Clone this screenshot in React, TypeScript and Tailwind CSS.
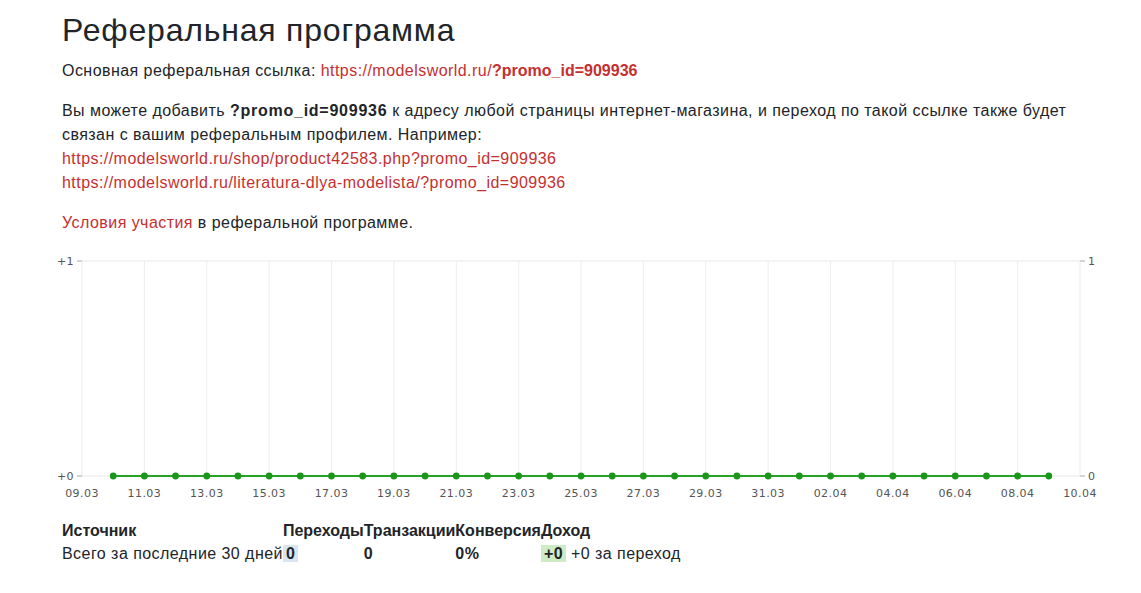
const START = 82;
const STEP = 998 / 32;

const labels = [
  "09.03", "11.03", "13.03", "15.03", "17.03", "19.03", "21.03", "23.03", "25.03",
  "27.03", "29.03", "31.03", "02.04", "04.04", "06.04", "08.04", "10.04",
];

// chart coordinates are taken relative to svg top
const TOP = 26;
const BOTTOM = 241;

const Chart = () => {
  const points = Array.from({ length: 31 }, (_, i) => START + STEP * (i + 1));
  return (
    <svg width="1141" height="284" className="block" style={{ fontFamily: '"DejaVu Sans", Verdana, sans-serif' }}>
      {labels.map((l, i) => {
        const x = START + STEP * 2 * i;
        return (
          <g key={l}>
            <line x1={x} x2={x} y1={TOP} y2={BOTTOM} stroke="#ededed" strokeWidth="1" />
            <text x={x} y={262} textAnchor="middle" fontSize="11" fill="#555">
              {l}
            </text>
          </g>
        );
      })}
      <line x1={START} x2={1080} y1={TOP} y2={TOP} stroke="#e8e8e8" />
      <line x1={START} x2={1080} y1={BOTTOM} y2={BOTTOM} stroke="#e8e8e8" />
      {/* ticks */}
      <line x1={77} x2={82} y1={TOP} y2={TOP} stroke="#aaa" />
      <line x1={77} x2={82} y1={BOTTOM} y2={BOTTOM} stroke="#aaa" />
      <line x1={1080} x2={1085} y1={TOP} y2={TOP} stroke="#aaa" />
      <line x1={1080} x2={1085} y1={BOTTOM} y2={BOTTOM} stroke="#aaa" />
      <text x={74} y={TOP + 4} textAnchor="end" fontSize="11" fill="#555">+1</text>
      <text x={74} y={BOTTOM + 4} textAnchor="end" fontSize="11" fill="#555">+0</text>
      <text x={1088} y={TOP + 4} fontSize="11" fill="#555">1</text>
      <text x={1088} y={BOTTOM + 4} fontSize="11" fill="#555">0</text>
      <line x1={points[0]} x2={points[points.length - 1]} y1={BOTTOM} y2={BOTTOM} stroke="#26a326" strokeWidth="2" />
      {points.map((x) => (
        <circle key={x} cx={x} cy={BOTTOM} r="3.4" fill="#1b961b" />
      ))}
    </svg>
  );
};

export default function App() {
  const link = "text-[#c62f2f] hover:underline";
  return (
    <div className="bg-white min-h-[593px] text-[16px] leading-[24px] tracking-[0.45px] text-[#212529]" style={{ fontFamily: '"Liberation Sans", Arial, sans-serif' }}>
      <div className="px-[62px] pt-[11px]">
        <h1 className="text-[32px] leading-[38px] tracking-[0.8px] font-normal mb-[10px]">Реферальная программа</h1>
        <p>
          Основная реферальная ссылка:{" "}
          <a href="#" className={link}>
            https://modelsworld.ru/<b className="tracking-normal">?promo_id=909936</b>
          </a>
        </p>
        <p className="mt-[16px]">
          Вы можете добавить <b className="tracking-[0.75px]">?promo_id=909936</b> к адресу любой страницы интернет-магазина, и переход по такой ссылке также будет
          связан с вашим реферальным профилем. Например:
          <br />
          <a href="#" className={link}>https://modelsworld.ru/shop/product42583.php?promo_id=909936</a>
          <br />
          <a href="#" className={link}>https://modelsworld.ru/literatura-dlya-modelista/?promo_id=909936</a>
        </p>
        <p className="mt-[16px]">
          <a href="#" className={link}>Условия участия</a> в реферальной программе.
        </p>
      </div>
      <Chart />
      <div className="px-[62px]">
        <table className="border-collapse">
          <thead>
            <tr className="leading-[23px] tracking-normal">
              <th className="p-0 text-left font-bold">Источник</th>
              <th className="p-0 text-left font-bold">Переходы</th>
              <th className="p-0 text-left font-bold">Транзакции</th>
              <th className="p-0 text-left font-bold">Конверсия</th>
              <th className="p-0 text-left font-bold">Доход</th>
            </tr>
          </thead>
          <tbody>
            <tr className="leading-[23px]">
              <td className="p-0">Всего за последние 30 дней</td>
              <td className="p-0 font-bold">
                <span className="bg-[#d9e6f2] px-[3px]">0</span>
              </td>
              <td className="p-0 font-bold">0</td>
              <td className="p-0 font-bold">0%</td>
              <td className="p-0">
                <span className="bg-[#cdebc5] px-[3px] font-bold">+0</span> +0 за переход
              </td>
            </tr>
          </tbody>
        </table>
      </div>
    </div>
  );
}
